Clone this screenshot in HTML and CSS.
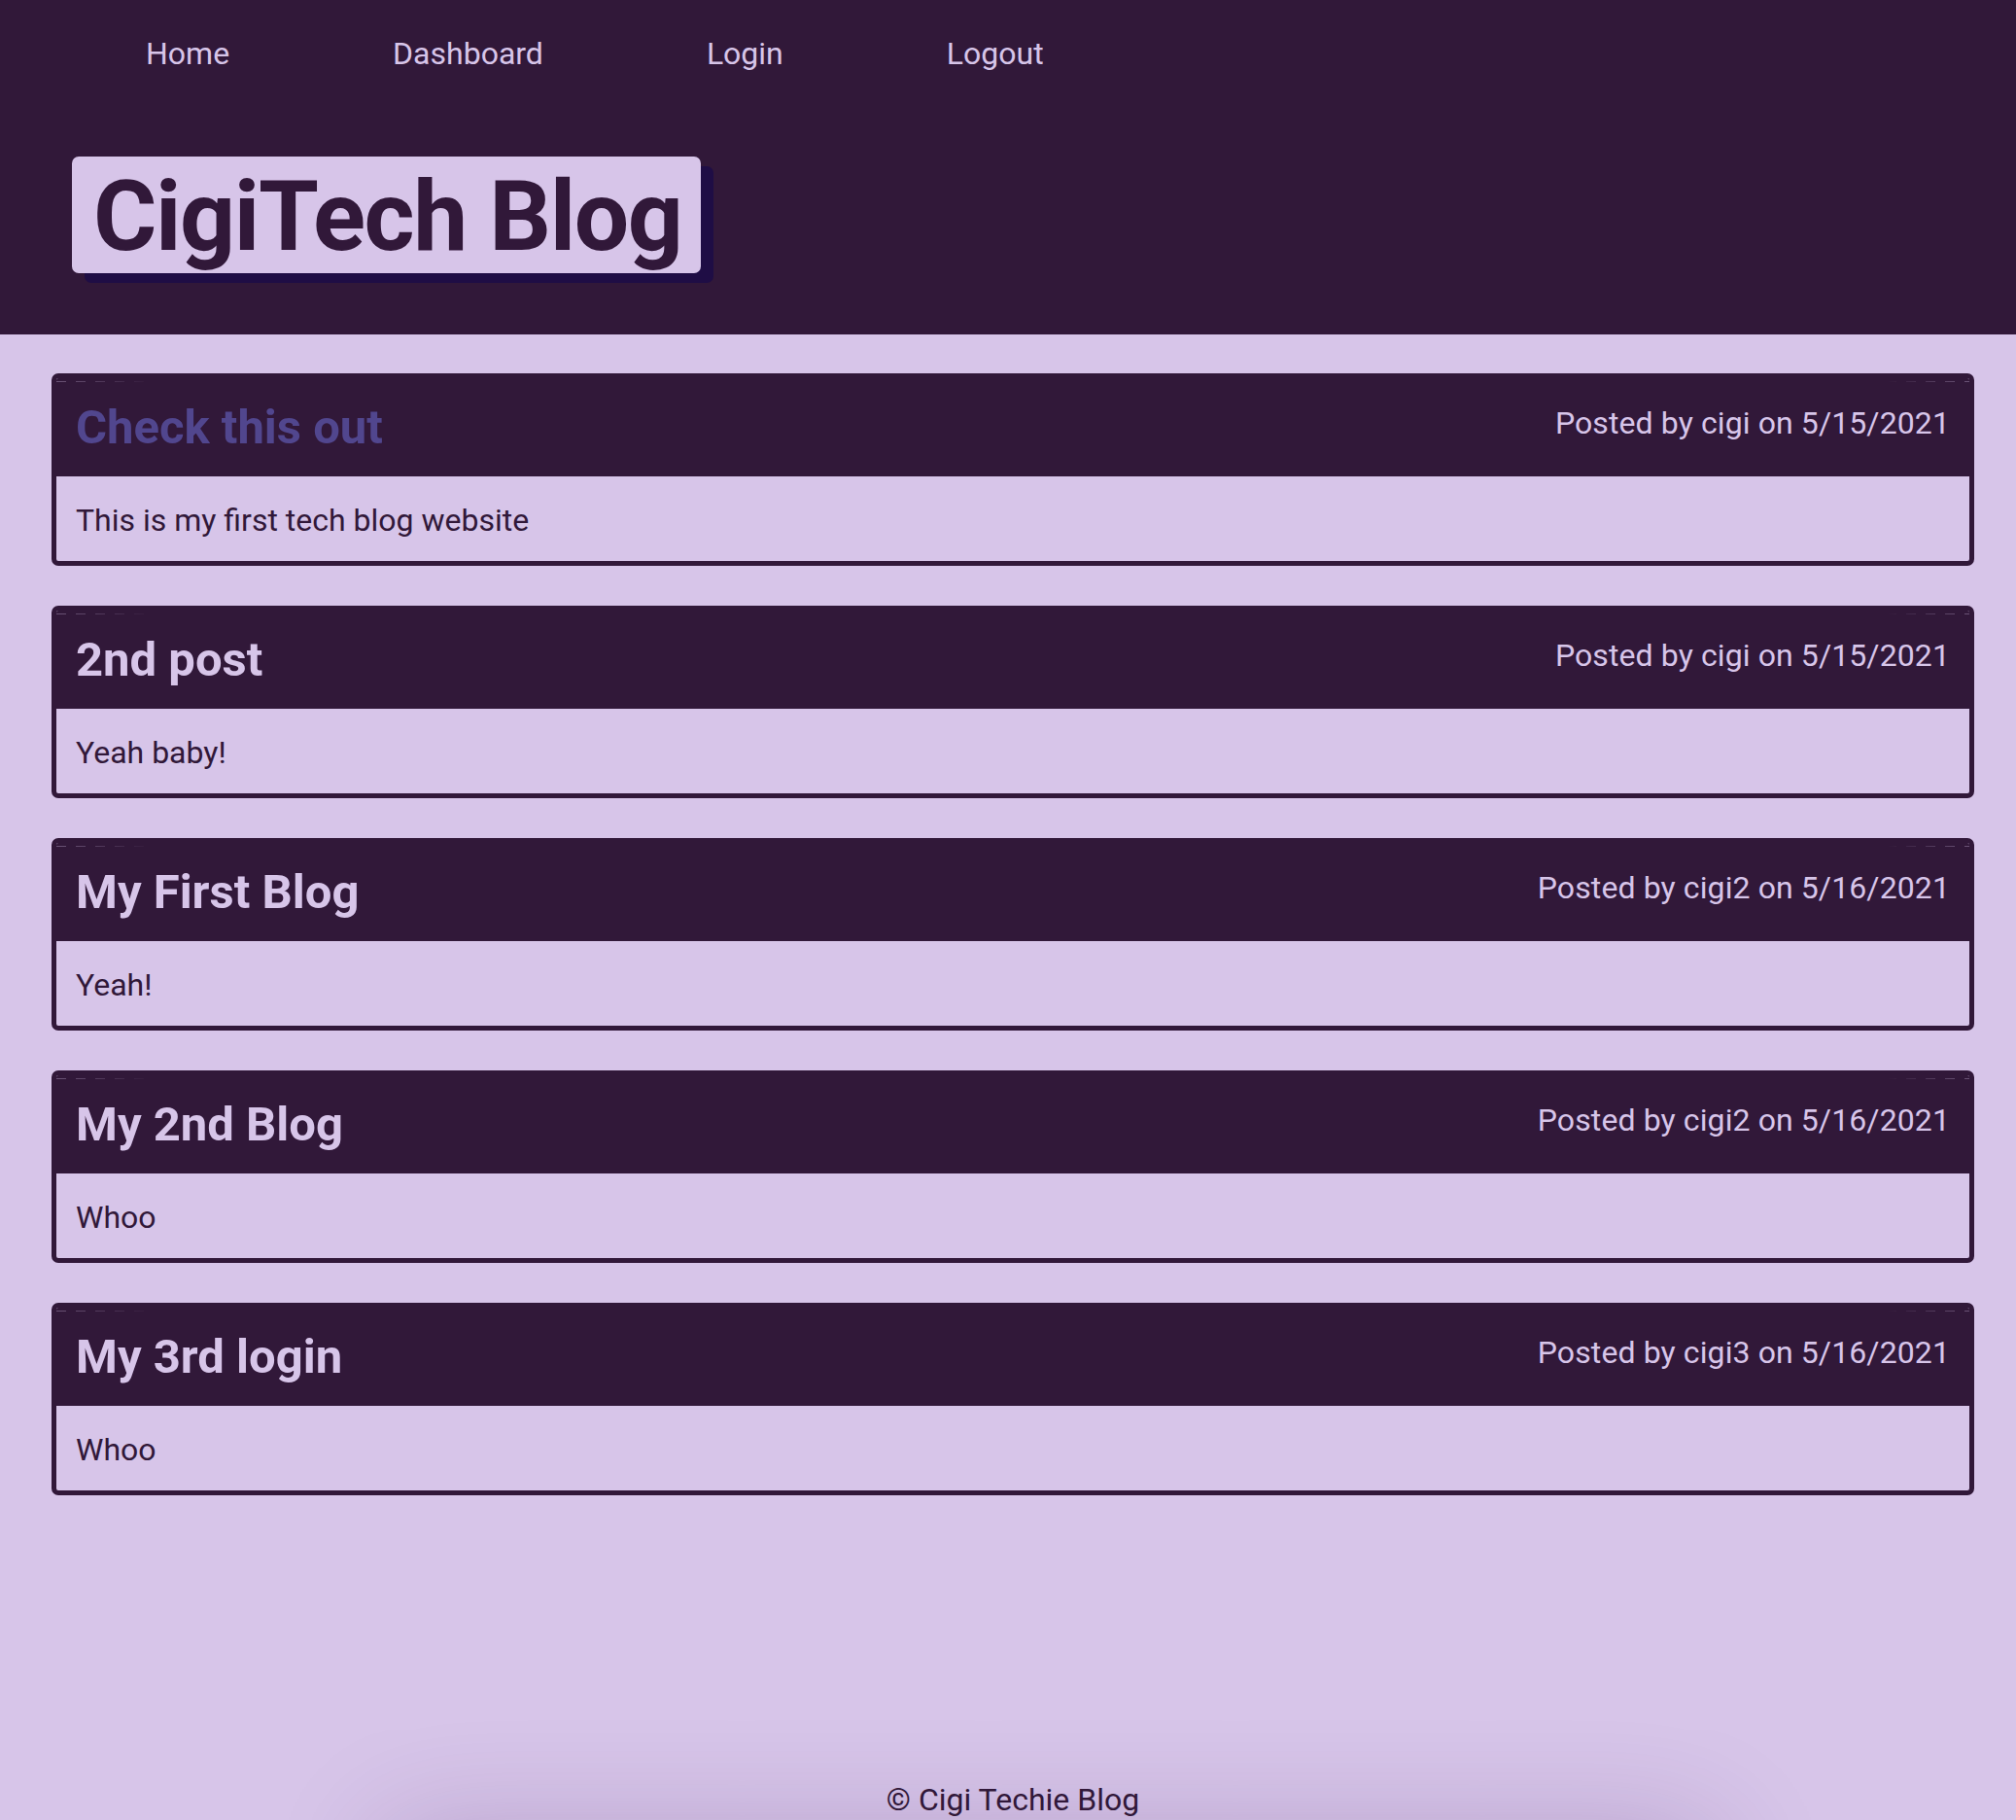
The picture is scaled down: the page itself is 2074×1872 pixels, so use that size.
FILE: index.html
```html
<!DOCTYPE html>
<html lang="en">
<head>
<meta charset="utf-8">
<title>CigiTech Blog</title>
<link rel="stylesheet" href="styles.css">
</head>
<body>
<header class="site-header">
  <nav class="nav">
    <a class="nav-link" href="#">Home</a>
    <a class="nav-link" href="#">Dashboard</a>
    <a class="nav-link" href="#">Login</a>
    <a class="nav-link" href="#">Logout</a>
  </nav>
  <h1 class="site-title">CigiTech Blog</h1>
</header>
<main class="posts">
  <article class="post">
    <div class="post-head">
      <h2 class="post-title visited">Check this out</h2>
      <p class="post-meta">Posted by cigi on 5/15/2021</p>
    </div>
    <div class="post-body">This is my first tech blog website</div>
  </article>
  <article class="post">
    <div class="post-head">
      <h2 class="post-title">2nd post</h2>
      <p class="post-meta">Posted by cigi on 5/15/2021</p>
    </div>
    <div class="post-body">Yeah baby!</div>
  </article>
  <article class="post">
    <div class="post-head">
      <h2 class="post-title">My First Blog</h2>
      <p class="post-meta">Posted by cigi2 on 5/16/2021</p>
    </div>
    <div class="post-body">Yeah!</div>
  </article>
  <article class="post">
    <div class="post-head">
      <h2 class="post-title">My 2nd Blog</h2>
      <p class="post-meta">Posted by cigi2 on 5/16/2021</p>
    </div>
    <div class="post-body">Whoo</div>
  </article>
  <article class="post">
    <div class="post-head">
      <h2 class="post-title">My 3rd login</h2>
      <p class="post-meta">Posted by cigi3 on 5/16/2021</p>
    </div>
    <div class="post-body">Whoo</div>
  </article>
</main>
<footer class="site-footer">
  <p class="footer-text">© Cigi Techie Blog</p>
  <div class="footer-shade"></div>
</footer>
</body>
</html>
```

FILE: styles.css
```css
* { box-sizing: border-box; }

html, body {
  margin: 0;
  padding: 0;
}

body {
  background: #d7c5e9;
  color: #311839;
  font-family: Roboto, "Noto Sans", sans-serif;
  font-size: 32px;
  line-height: 40px;
  overflow: hidden;
}

.site-header {
  background: #311839;
  padding: 35px 0 63px 74px;
}

.nav {
  display: flex;
  gap: 168px;
  padding-left: 76px;
}

.nav-link {
  color: #d7c5e9;
  text-decoration: none;
  font-size: 32px;
  line-height: 40px;
}

.site-title {
  display: inline-block;
  margin: 86px 0 0 0;
  padding: 3px 19px 0 22px;
  height: 120px;
  font-size: 100px;
  line-height: 117px;
  font-weight: 700;
  letter-spacing: -1.4px;
  color: #311839;
  background: #d7c5e9;
  border-radius: 7px;
  box-shadow: 13px 10px 0 #1f0d45;
}

.posts {
  margin: 40px 43px 0 53px;
  display: flex;
  flex-direction: column;
  gap: 41px;
}

.post {
  border: 5px solid #311839;
  border-radius: 7px;
  overflow: hidden;
  background: #d7c5e9;
}

.post-head {
  position: relative;
  background: #311839;
  display: flex;
  justify-content: space-between;
  align-items: flex-start;
  padding: 22px 20px 21px 20px;
}

.post-head::before,
.post-head::after {
  content: "";
  position: absolute;
  top: 3px;
  height: 1px;
  width: 100px;
  background: repeating-linear-gradient(90deg, rgba(215,197,233,0.35) 0 10px, transparent 10px 20px);
}

.post-head::before {
  left: 0;
  -webkit-mask-image: linear-gradient(90deg, #000, transparent);
  mask-image: linear-gradient(90deg, #000, transparent);
}

.post-head::after {
  right: 0;
  width: 85px;
  -webkit-mask-image: linear-gradient(270deg, #000, transparent);
  mask-image: linear-gradient(270deg, #000, transparent);
}

.post-title {
  margin: 0;
  font-size: 49px;
  line-height: 58px;
  font-weight: 700;
  color: #d7c5e9;
}

.post-title.visited {
  color: #51468e;
}

.post-meta {
  margin: 4px 0 0 0;
  color: #d7c5e9;
  font-size: 32px;
  line-height: 40px;
  letter-spacing: 0.1px;
}

.post-body {
  padding: 25px 21px 22px 20px;
  color: #311839;
}

.site-footer {
  margin-top: 293px;
  text-align: center;
}

.footer-text {
  margin: 0;
  padding-left: 10px;
  position: relative;
  z-index: 1;
}

.footer-shade {
  margin: 25px 0 0 410px;
  width: 1340px;
  height: 200px;
  background: rgba(60, 25, 90, 0.12);
  box-shadow: 0 0 120px 10px rgba(60, 25, 90, 0.22);
}
```
